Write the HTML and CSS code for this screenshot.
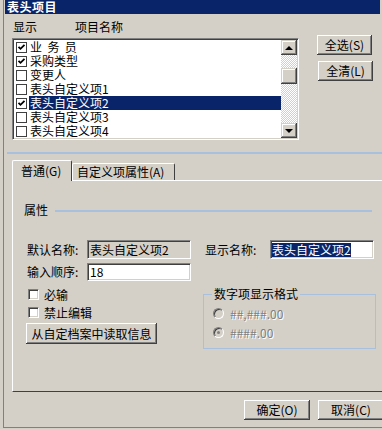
FILE: index.html
```html
<!DOCTYPE html>
<html lang="zh-CN">
<head>
  <meta charset="UTF-8">
  <title>表头项目</title>
  <link rel="stylesheet" href="styles.css">
</head>
<body>
  <div class="frame">
    <div class="titlebar">表头项目</div>

    <!-- Item list + select buttons -->
    <div class="top">
      <div class="listcol">
        <div class="list-head"><span class="col-show">显示</span><span>项目名称</span></div>
        <div class="listbox">
          <div class="items">
            <div class="item"><span class="lcheck"><svg viewBox="0 0 9 9"><polyline points="1.5,3.8 3.5,5.8 7.5,1.8"/></svg></span><span class="ltext">业&nbsp;&nbsp;务&nbsp;&nbsp;员</span></div>
            <div class="item"><span class="lcheck"><svg viewBox="0 0 9 9"><polyline points="1.5,3.8 3.5,5.8 7.5,1.8"/></svg></span><span class="ltext">采购类型</span></div>
            <div class="item"><span class="lcheck"></span><span class="ltext">变更人</span></div>
            <div class="item"><span class="lcheck"></span><span class="ltext">表头自定义项1</span></div>
            <div class="item sel"><span class="lcheck"><svg viewBox="0 0 9 9"><polyline points="1.5,3.8 3.5,5.8 7.5,1.8"/></svg></span><span class="ltext">表头自定义项2</span></div>
            <div class="item"><span class="lcheck"></span><span class="ltext">表头自定义项3</span></div>
            <div class="item"><span class="lcheck"></span><span class="ltext">表头自定义项4</span></div>
          </div>
          <div class="vscroll">
            <div class="sbtn"><span class="arrow up"></span></div>
            <div class="track"><div class="thumb"></div></div>
            <div class="sbtn"><span class="arrow down"></span></div>
          </div>
        </div>
      </div>
      <div class="btncol">
        <button class="btn btn-sel">全选(S)</button>
        <button class="btn btn-clr">全清(L)</button>
      </div>
    </div>

    <div class="sep"></div>

    <!-- Tabs -->
    <div class="tabs">
      <div class="tab active">普通(G)</div>
      <div class="tab">自定义项属性(A)</div>
    </div>
    <div class="panel">
      <div class="group-title"><span>属性</span><span class="rule"></span></div>

      <div class="form-row">
        <span class="lbl">默认名称:</span>
        <span class="field disabled">表头自定义项2</span>
        <span class="lbl lbl2">显示名称:</span>
        <span class="field nopad"><span class="hl">表头自定义项2</span></span>
      </div>
      <div class="form-row row2">
        <span class="lbl">输入顺序:</span>
        <span class="field short">18</span>
      </div>

      <div class="lower">
        <div class="checks">
          <div class="check-row"><span class="cbox"></span>必输</div>
          <div class="check-row"><span class="cbox"></span>禁止编辑</div>
          <button class="btn btn-read">从自定档案中读取信息</button>
        </div>
        <fieldset class="numfmt">
          <legend>数字项显示格式</legend>
          <div class="radio-row"><span class="rdo"></span><span class="dim">##,###.00</span></div>
          <div class="radio-row"><span class="rdo on"></span><span class="dim">####.00</span></div>
        </fieldset>
      </div>
    </div>

    <!-- Dialog buttons -->
    <div class="footer">
      <button class="btn btn-foot">确定(O)</button>
      <button class="btn btn-foot">取消(C)</button>
    </div>
  </div>
</body>
</html>
```

FILE: styles.css
```css
/* Base */
* {
  box-sizing: border-box;
}
body {
  margin: 0;
  width: 382px;
  height: 429px;
  overflow: hidden;
  background-color: #d4d0c8; /* classic dialog grey */
  font-family: "Noto Sans CJK SC", "DejaVu Sans", sans-serif;
  font-size: 12px;
  line-height: 14px;
  color: #000;
}
.frame {
  margin-left: 3px;
  height: 428px;
  border-left: 1px solid #808080;
  border-bottom: 1px solid #808080;
}
.titlebar {
  height: 14px;
  margin: 0 2px 0 1px;
  padding-left: 2px;
  background-color: #0a246a;
  color: #fff;
  font-weight: bold;
  letter-spacing: 0.5px;
}

/* Raised 3D button */
.btn {
  padding: 0;
  border: 0;
  background-color: #d4d0c8;
  font: inherit;
  color: #000;
  text-align: center;
  box-shadow: inset -1px -1px #404040, inset 1px 1px #fff, inset -2px -2px #808080;
}

/* List section */
.top {
  display: flex;
  padding-left: 8px;
}
.listcol {
  width: 287px;
}
.list-head {
  height: 24px;
  display: flex;
  align-items: center;
  padding: 2px 0 0 1px;
}
.col-show {
  width: 62px;
}
.listbox {
  height: 102px;
  display: flex;
  padding: 1px;
  background-color: #fff;
  border: 1px solid;
  border-color: #808080 #fff #fff #808080;
  box-shadow: inset 1px 1px #404040, inset -1px -1px #d4d0c8;
}
.items {
  flex: 1;
  overflow: hidden;
}
.item {
  height: 14px;
  display: flex;
  align-items: center;
  white-space: nowrap;
}
.lcheck {
  flex: none;
  width: 11px;
  height: 11px;
  margin: 0 2px;
  border: 1px solid #404040;
  background-color: #fff;
  display: flex;
}
.lcheck svg {
  width: 9px;
  height: 9px;
}
.lcheck polyline, .cbox polyline {
  fill: none;
  stroke: #000;
  stroke-width: 1.8;
}
.ltext {
  flex: 1;
  height: 14px;
  padding-left: 1px;
}
.item.sel .ltext {
  background-color: #0a246a;
  color: #fff;
}

/* Scrollbar */
.vscroll {
  flex: none;
  width: 16px;
  display: flex;
  flex-direction: column;
}
.sbtn, .thumb {
  flex: none;
  height: 15px;
  background-color: #d4d0c8;
  box-shadow: inset -1px -1px #404040, inset 1px 1px #d4d0c8, inset -2px -2px #808080, inset 2px 2px #fff;
  display: flex;
  align-items: center;
  justify-content: center;
}
.thumb {
  height: 16px;
}
.track {
  flex: 1;
  padding-top: 13px;
  background: repeating-conic-gradient(#d4d0c8 0 25%, #fff 0 50%) 0 0 / 2px 2px;
}
.arrow {
  width: 0;
  height: 0;
  border-left: 4px solid transparent;
  border-right: 4px solid transparent;
}
.arrow.up {
  border-bottom: 4px solid #000;
}
.arrow.down {
  border-top: 4px solid #000;
}

.btncol {
  display: flex;
  flex-direction: column;
  align-items: flex-start;
  margin-left: 18px;
  padding-top: 21px;
}
.btn-sel, .btn-clr {
  width: 55px;
  height: 20px;
}
.btn-clr {
  margin: 6px 0 0 1px;
}

.sep {
  height: 2px;
  margin: 12px 0 0 3px;
  background-color: #a6c0de;
}

/* Tabs */
.tabs {
  display: flex;
  align-items: flex-end;
  height: 19px;
  margin: 7px 0 0 8px;
}
.tab {
  height: 17px;
  padding-left: 4px;
  line-height: 15px;
  border: 1px solid #fff;
  border-bottom: 0;
  border-right-color: #404040;
  border-radius: 2px 2px 0 0;
  width: 103px;
}
.tab.active {
  position: relative;
  z-index: 1;
  width: 60px;
  height: 21px;
  margin-bottom: -1px;
  padding: 2px 0 0 8px;
  background-color: #d4d0c8;
}
.panel {
  height: 212px;
  margin-left: 8px;
  border-left: 1px solid #fff;
  border-top: 1px solid #fff;
  border-bottom: 1px solid #404040;
}
.group-title {
  display: flex;
  align-items: center;
  height: 14px;
  margin-top: 22px;
  padding-left: 11px;
}
.rule {
  width: 317px;
  height: 2px;
  margin: 2px 0 0 7px;
  background-color: #a6c0de;
}

/* Form fields */
.form-row {
  display: flex;
  align-items: center;
  margin-top: 23px;
  padding-left: 14px;
}
.form-row.row2 {
  margin-top: 4px;
}
.lbl {
  width: 60px;
}
.lbl2 {
  width: 65px;
  margin-left: 14px;
}
.field {
  width: 104px;
  height: 19px;
  padding-left: 2px;
  display: flex;
  align-items: center;
  white-space: nowrap;
  background-color: #fff;
  border: 1px solid;
  border-color: #808080 #fff #fff #808080;
  box-shadow: inset 1px 1px #404040, inset -1px -1px #d4d0c8;
}
.field.short {
  height: 18px;
}
.field.disabled {
  background-color: #d4d0c8;
}
.field.nopad {
  padding-left: 1px;
}
.hl {
  background-color: #0a246a;
  color: #fff;
}

.lower {
  display: flex;
}
.checks {
  width: 190px;
  padding-left: 15px;
}
.check-row {
  display: flex;
  align-items: center;
  height: 13px;
  margin-top: 7px;
}
.check-row + .check-row {
  margin-top: 5px;
}
.cbox {
  width: 11px;
  height: 11px;
  margin-right: 5px;
  background-color: #fff;
  border: 1px solid;
  border-color: #808080 #fff #fff #808080;
  box-shadow: inset 1px 1px #404040, inset -1px -1px #d4d0c8;
}
.btn-read {
  width: 131px;
  height: 21px;
  margin: 4px 0 0 -2px;
}

/* Number format group */
.numfmt {
  width: 173px;
  min-width: 0;
  margin: 6px 0 0 0;
  padding: 0 0 9px 8px;
  border: 1px solid #a6c0de;
}
.numfmt legend {
  padding: 0 2px;
  line-height: 14px;
}
.radio-row {
  display: flex;
  align-items: center;
  height: 13px;
  margin-top: 6px;
  padding-left: 1px;
}
.rdo {
  position: relative;
  width: 11px;
  height: 11px;
  margin-right: 6px;
  border-radius: 50%;
  border: 1px solid;
  border-color: #808080 #fff #fff #808080;
  background-color: #d4d0c8;
  box-shadow: inset 1px 1px #404040;
}
.rdo.on::after {
  content: "";
  position: absolute;
  left: 3px;
  top: 3px;
  width: 3px;
  height: 3px;
  border-radius: 50%;
  background-color: #808080;
}
.dim {
  color: #808080;
  text-shadow: 1px 1px 0 #fff;
}

/* Footer */
.footer {
  display: flex;
  gap: 8px;
  margin: 8px 0 0 240px;
}
.btn-foot {
  flex: none;
  width: 66px;
  height: 20px;
}
```
